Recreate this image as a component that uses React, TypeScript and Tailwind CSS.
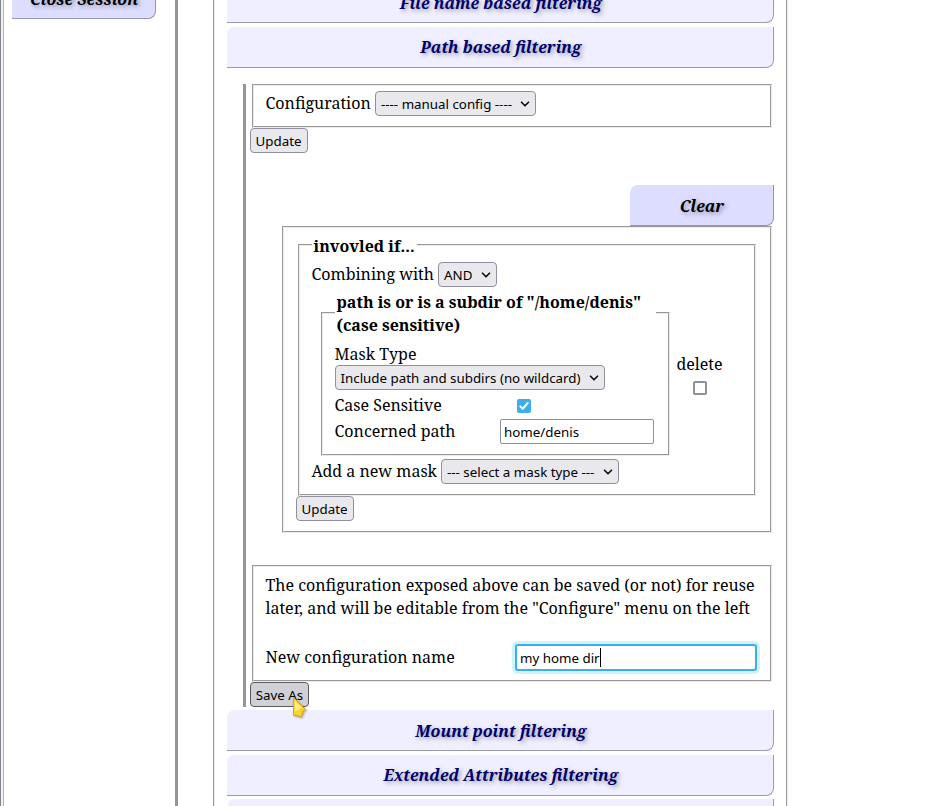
import type { ReactNode } from 'react';

const groove = 'border-2 [border-style:groove] border-[#ececec]';
const control = "font-['Noto_Sans',sans-serif] text-[13.333px] text-black";

function Chevron() {
  return (
    <svg className="mr-[5px] block h-[10px] w-[10px] shrink-0" viewBox="0 0 10 10" fill="none" stroke="#0c0c10" strokeWidth="1.6" strokeLinecap="round" strokeLinejoin="round">
      <path d="M1.5 3.2 L5 6.8 L8.5 3.2" />
    </svg>
  );
}

function Select({ label, className }: { label: string; className: string }) {
  return (
    <div className={`${control} ${className} flex h-[25px] shrink-0 items-center justify-between rounded-[4px] border border-[#8f8f9d] bg-[#e9e9ed] leading-[23px] whitespace-nowrap`}>
      <span className="pt-[2px] leading-[21px]">{label}</span>
      <Chevron />
    </div>
  );
}

function Button({ children, className }: { children: ReactNode; className: string }) {
  return (
    <button className={`${control} ${className} block h-[25px] rounded-[4px] border pt-[2px] text-center leading-[21px] whitespace-nowrap`}>{children}</button>
  );
}

function Bar({ children, className = '' }: { children: ReactNode; className?: string }) {
  return (
    <div className={`${className} h-[41px] shrink-0 rounded-tl-[8px] rounded-br-[8px] border-r border-b border-[#9a9aad] bg-[#f0efff] pl-[1.5px] text-center font-bold text-[#00006b] italic [text-shadow:2px_2px_4px_#9a9aa8]`}>
      {children}
    </div>
  );
}

function Tab({ children, className }: { children: ReactNode; className: string }) {
  return (
    <div className={`${className} h-[41px] w-[144px] shrink-0 rounded-tl-[8px] rounded-br-[8px] border-r border-b border-[#9494b4] bg-[#ddddff] pl-px text-center font-bold italic [text-shadow:2px_2px_4px_#9494a8]`}>
      {children}
    </div>
  );
}

function MaskFieldset() {
  return (
    <fieldset className={`${groove} ml-[9px] h-[166px] w-[349px] min-w-0 shrink-0 px-[12px]`}>
      <legend className="h-[46px] pt-px pr-[2px] pl-[1.5px] font-bold">path is or is a subdir of "/home/denis" (case sensitive)</legend>
      <div className="mt-[7px] -ml-[0.5px] h-[22px]">Mask Type</div>
      <Select label="Include path and subdirs (no wildcard)" className="w-[270px] pl-[4.5px]" />
      <div className="mt-[3px] flex h-[23px]">
        <span className="mt-px -ml-[0.5px] w-[182.5px]">Case Sensitive</span>
        <span className="mt-[6px] flex h-[14px] w-[14px] rounded-[2px] bg-[#3daee9]">
          <svg className="h-[14px] w-[14px]" viewBox="0 0 14 14" fill="none" stroke="#fff" strokeWidth="2" strokeLinecap="round" strokeLinejoin="round">
            <path d="M3.3 7.4 L5.7 9.8 L10.7 4" />
          </svg>
        </span>
      </div>
      <div className="mt-[3px] flex">
        <span className="mt-px -ml-[0.5px] w-[165.5px]">Concerned path</span>
        <div className={`${control} h-[25px] w-[154px] rounded-[2px] border border-[#8f8f9d] bg-white pt-[2px] pl-[3px] leading-[21px]`}>home/denis</div>
      </div>
    </fieldset>
  );
}

function Pointer() {
  return (
    <svg className="absolute top-[14px] left-[42px] h-[24px] w-[18px] drop-shadow-[1px_1px_1px_#00000055]" viewBox="0 0 18 24">
      <path d="M1.8 1.8 L13.4 13.4 L10.8 15.4 L9.4 20.8 L1.4 18.9 Z" fill="#fbd32f" stroke="#d9a514" strokeWidth="1" strokeLinejoin="round" />
      <path d="M2.8 4.4 L9.6 11.8 L3 15.6 Z" fill="#fff08a" />
    </svg>
  );
}

export default function App() {
  return (
    <div className="flex h-[806px] w-[936px] overflow-hidden bg-white font-['Noto_Serif','Liberation_Serif',serif] text-[16px] leading-[23px] text-black">
      <aside className="flex h-full w-[178px] shrink-0 border-r-[3px] border-[#969696]">
        <div className="h-full w-[4px] shrink-0 border-r border-l border-r-[#b4b4b8] border-l-[#84848c] bg-[#f3f3f5]" />
        <Tab className="-mt-[22px] ml-[8px] pt-[10px]">Close Session</Tab>
      </aside>

      <main className="ml-[35px] flex h-full w-[575px] shrink-0 flex-col border-x-2 border-y-0 border-[#ececec] pr-[12px] pl-[12px] [border-style:groove]">
        <Bar className="-mt-[18px] pt-[10px]">File name based filtering</Bar>
        <Bar className="mt-[4px] pt-[9px]">Path based filtering</Bar>

        <section className="mt-[16px] ml-[16px] flex h-[623px] shrink-0 flex-col border-l-[3px] border-[#969696] pl-[4px]">
          <div className={`${groove} ml-[2px] flex h-[44px] w-[520px] shrink-0 pt-[5px] pl-[11.5px]`}>
            <span className="mt-px mr-[4px] w-[105.5px]">Configuration</span>
            <Select label="---- manual config ----" className="w-[161px] pl-[5px]" />
          </div>
          <Button className="w-[58px] shrink-0 border-[#8f8f9d] bg-[#e9e9ed] pr-px">Update</Button>

          <Tab className="mt-[32px] ml-[380px] pt-[10px]">Clear</Tab>
          <div className={`${groove} ml-[32px] h-[307px] w-[490px] shrink-0 pt-[6px] pl-[12px]`}>
            <fieldset className={`${groove} ml-[2px] h-[262px] w-[458px] min-w-0 px-[12px]`}>
              <legend className="pt-[2px] pr-[2.5px] pl-[1.5px] leading-[20px] font-bold">invovled if...</legend>
              <div className="mt-[6px] flex">
                <span className="mt-px -ml-[0.5px] w-[126.5px]">Combining with</span>
                <Select label="AND" className="w-[59px] pl-[5px]" />
              </div>
              <div className="mt-[3px] flex">
                <MaskFieldset />
                <div className="ml-[6px] flex w-[47px] flex-col items-center pt-[63px]">
                  <span>delete</span>
                  <span className="mt-[5px] h-[14px] w-[14px] rounded-[2px] border-2 border-[#8f8f9d] bg-white" />
                </div>
              </div>
              <div className="mt-[3px] flex">
                <span className="mt-px -ml-[0.5px] w-[129.5px]">Add a new mask</span>
                <Select label="--- select a mask type ---" className="w-[178px] pl-[5px]" />
              </div>
            </fieldset>
            <Button className="w-[58px] border-[#8f8f9d] bg-[#e9e9ed] pr-px">Update</Button>
          </div>

          <div className={`${groove} mt-[32px] ml-[2px] h-[117px] w-[520px] shrink-0 pt-[7px] pl-[11.5px]`}>
            <p className="whitespace-nowrap">
              The configuration exposed above can be saved (or not) for reuse
              <br />
              later, and will be editable from the "Configure" menu on the left
            </p>
            <div className="mt-[24px] flex">
              <span className="mt-[2px] w-[249.5px]">New configuration name</span>
              <div className={`${control} flex h-[27px] w-[242px] rounded-[3px] border-2 border-[#3daee9] bg-white pl-[3px] leading-[21px] shadow-[0_0_0_3px_#cdf3fd]`}>
                <span className="pt-[2px]">my home dir</span>
                <span className="mt-[2px] h-[19px] w-px bg-black" />
              </div>
            </div>
          </div>
          <div className="relative">
            <Button className="w-[59px] border-[#5b5b66] bg-[#d0d0d7]">Save As</Button>
            <Pointer />
          </div>
        </section>

        <Bar className="mt-[3px] pt-[10px]">Mount point filtering</Bar>
        <Bar className="mt-[4px] pt-[9px]">Extended Attributes filtering</Bar>
        <Bar className="mt-[3px]">{' '}</Bar>
      </main>
    </div>
  );
}
